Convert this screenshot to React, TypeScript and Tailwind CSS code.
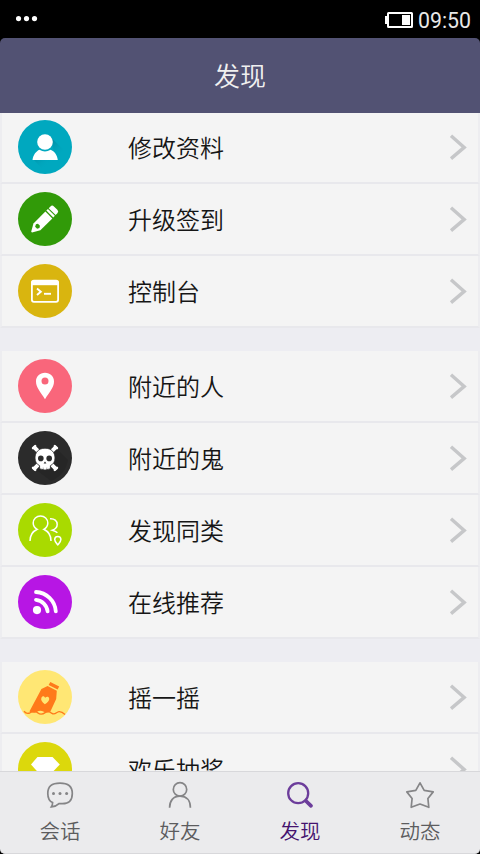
import type { ReactNode } from "react";

type Item = {
  label: string;
  color: string;
  icon: ReactNode;
};

const UserIcon = () => (
  <>
    <path d="M32.5 17 L48 32 A27 27 0 0 1 25 50 L16 40 L38 40 Z" fill="url(#userShade)" />
    <defs>
      <linearGradient id="userShade" x1="24" y1="24" x2="40" y2="44" gradientUnits="userSpaceOnUse">
        <stop offset="0" stopColor="#007d94" stopOpacity="0.9" />
        <stop offset="0.8" stopColor="#00a8bf" stopOpacity="0" />
      </linearGradient>
    </defs>
    <circle cx="27" cy="22" r="7.8" fill="#fff" />
    <path d="M14.5 40 C15.2 34.5 18.4 31.2 21.4 29.8 Q27 33.2 32.6 29.8 C36.4 31.4 39.2 35 39.8 40 Z" fill="#fff" />
  </>
);

const PencilIcon = () => (
  <g transform="translate(13.6 40.2) rotate(-45)" fill="#fff">
    <path d="M0 -0.6 L7.5 -4.9 H24.4 V4.9 H7.5 L0 0.6 Z" />
    <path d="M25.7 -4.9 H28 V4.9 H25.7 Z" />
    <path d="M29.1 -4.9 H31.6 Q34 -4.9 34 -2.4 V2.4 Q34 4.9 31.6 4.9 H29.1 Z" />
    <path d="M6.4 -1.4 L8.6 -2.5 L10.4 -1.4 V1.4 L8.6 2.5 L6.4 1.4 Z" fill="#319a08" />
  </g>
);

const ConsoleIcon = () => (
  <>
    <rect x="13.9" y="16.6" width="26.2" height="21.2" rx="2" fill="none" stroke="#fff" strokeWidth="1.8" />
    <path d="M13.5 17 H40.5 V21.2 H13.5 Z" fill="#fff" />
    <path d="M19 24.6 L22.8 27.7 L19 30.9" fill="none" stroke="#fff" strokeWidth="1.9" />
    <path d="M26 29.8 H33" stroke="#fff" strokeWidth="1.9" />
  </>
);

const PinIcon = () => (
  <path
    fill="#fff"
    fillRule="evenodd"
    d="M27 13.8 C21.8 13.8 18 17.4 18 22.4 C18 28.4 22.5 32.6 27 40.2 C31.5 32.6 36 28.4 36 22.4 C36 17.4 32.2 13.8 27 13.8 Z M27 18.5 A3.5 3.5 0 1 1 27 25.5 A3.5 3.5 0 1 1 27 18.5 Z"
  />
);

const SkullIcon = () => (
  <>
    <path d="M38 17 L50 29 A27 27 0 0 1 33 50 L17 38 Z" fill="#262626" />
    <path d="M15.6 15.6 L38.4 38.4 M38.4 15.6 L15.6 38.4" stroke="#fff" strokeWidth="4" />
    <path
      d="M15 17.2 L17.2 15 M36.8 15 L39 17.2 M15 36.8 L17.2 39 M36.8 39 L39 36.8"
      stroke="#fff"
      strokeWidth="2.4"
      strokeLinecap="round"
    />
    <path
      d="M27 17.2 C20.4 17.2 17 21.6 17 27 C17 30.8 18.8 33.4 21.6 34.6 V37.8 Q27 40.4 32.4 37.8 V34.6 C35.2 33.4 37 30.8 37 27 C37 21.6 33.6 17.2 27 17.2 Z"
      fill="#fff"
      stroke="#2b2b2b"
      strokeWidth="0.8"
    />
    <circle cx="22.8" cy="27.4" r="2.8" fill="#2b2b2b" />
    <circle cx="31.2" cy="27.4" r="2.8" fill="#2b2b2b" />
    <path d="M27 30.6 L28.4 32.6 H25.6 Z" fill="#2b2b2b" />
    <path d="M25.2 36.6 V39 M28.8 36.6 V39" stroke="#2b2b2b" strokeWidth="0.4" />
  </>
);

const PeopleIcon = () => (
  <g fill="none" stroke="#fff" strokeWidth="1.5">
    <path d="M12 38 C12 31.5 14.5 28.5 19.2 26.3 C16.6 24.9 15.2 22.6 15.2 20 C15.2 16 18.4 12.9 22.5 12.9 C26.6 12.9 29.8 16 29.8 20 C29.8 22.6 28.4 24.9 25.8 26.3 C30.5 28.5 33 31.5 33 38" />
    <path d="M32 15.8 C36.4 15.4 39.2 18 39.2 21.4 C39.2 24.2 37.4 26 34.3 27.2 C36.5 27.8 38 28.4 39.4 29.7" />
    <path d="M39.8 33.4 C37.8 33.4 36.7 35 36.7 36.6 C36.7 38.5 38.4 40 39.8 41.8 C41.2 40 42.9 38.5 42.9 36.6 C42.9 35 41.8 33.4 39.8 33.4 Z" />
  </g>
);

const FeedIcon = () => (
  <>
    <circle cx="19" cy="35.1" r="4.1" fill="#fff" />
    <path d="M18 24.8 A13 13 0 0 1 29.6 36.4" fill="none" stroke="#fff" strokeWidth="3.8" strokeLinecap="round" />
    <path d="M18 17 A21 21 0 0 1 37.8 36.4" fill="none" stroke="#fff" strokeWidth="3.8" strokeLinecap="round" />
  </>
);

const BottleIcon = () => (
  <>
    <path d="M32.3 12 L41.2 16.6 L39.6 19.6 L30.6 15 Z" fill="#ff7a1a" />
    <path
      d="M29.6 16 L38.8 20.7 L38.2 29 L32.4 41.4 Q29.5 43.5 25.8 41.8 Q22 39.5 18.8 42 Q15 44 11.4 41.4 L23.4 19 Z"
      fill="#ff7a1a"
    />
    <path
      d="M26.8 34.2 C23.8 31.8 22.4 29.6 23.5 27.4 C24.5 25.6 26.4 26 27.2 27.8 C28.8 26.2 30.8 26.6 31.2 28.4 C31.6 30.6 29.5 32.6 26.8 34.2 Z"
      fill="#ffe774"
    />
    <path
      d="M6 41.2 Q8.6 44.5 12 42.8 C15 40.5 17.5 41 20 43 C22.5 45 25 44.2 27.5 42.4 C30 40.8 32 41.6 34 43.4 C37 45.2 38.5 42 41 41.6 C43.5 41.4 45 42.6 47 44.6"
      fill="none"
      stroke="#ff7a1a"
      strokeWidth="1.4"
    />
  </>
);

const DiamondIcon = () => <path d="M19.5 15 H34.5 L41.8 22.5 L27 38 L13 22.5 Z" fill="#fff" />;

const groups: Item[][] = [
  [
    { label: "修改资料", color: "#00a8bf", icon: <UserIcon /> },
    { label: "升级签到", color: "#319a08", icon: <PencilIcon /> },
    { label: "控制台", color: "#d9b50f", icon: <ConsoleIcon /> },
  ],
  [
    { label: "附近的人", color: "#f9667b", icon: <PinIcon /> },
    { label: "附近的鬼", color: "#2b2b2b", icon: <SkullIcon /> },
    { label: "发现同类", color: "#a9da00", icon: <PeopleIcon /> },
    { label: "在线推荐", color: "#b716e4", icon: <FeedIcon /> },
  ],
  [
    { label: "摇一摇", color: "#ffe774", icon: <BottleIcon /> },
    { label: "欢乐抽奖", color: "#dcd80c", icon: <DiamondIcon /> },
  ],
];

const tabs = [
  {
    label: "会话",
    icon: (
      <g stroke="#858587" strokeWidth="1.7" fill="none">
        <path d="M14 22.6 H17.5 C24.5 22.6 27.3 19 27.3 12.4 C27.3 5.6 23.5 2.1 15 2.1 C6.5 2.1 2.8 5.6 2.8 12.4 C2.8 17 4.2 20 7.6 21.6 C7.6 23.4 7.2 24.6 6.4 25.8 C9.4 25.6 12 24.6 14 22.6 Z" />
        <g fill="#858587" stroke="none">
          <circle cx="8.5" cy="12.6" r="1.5" />
          <circle cx="15" cy="12.6" r="1.5" />
          <circle cx="21.6" cy="12.6" r="1.5" />
        </g>
      </g>
    ),
  },
  {
    label: "好友",
    icon: (
      <g stroke="#858587" strokeWidth="1.7" fill="none">
        <circle cx="15" cy="8.4" r="6.7" />
        <path d="M4.6 26.8 C4.6 19.8 8.2 15.2 15 15.2 C21.8 15.2 25.4 19.8 25.4 26.8" />
      </g>
    ),
  },
  {
    label: "发现",
    active: true,
    icon: (
      <g stroke="#6c3d9b" fill="none">
        <circle cx="13.2" cy="12.2" r="10" strokeWidth="2.3" />
        <path d="M21 20 L26 24.8" strokeWidth="3.8" strokeLinecap="round" />
      </g>
    ),
  },
  {
    label: "动态",
    icon: (
      <path
        d="M15 1.8 L19.2 9.4 L28.2 10.9 L22.9 17.5 L23.8 26.3 L15 23 L6.2 26.3 L7.1 17.5 L1.8 10.9 L10.8 9.4 Z"
        stroke="#858587"
        strokeWidth="1.7"
        strokeLinejoin="round"
        fill="none"
      />
    ),
  },
];

const StatusBar = () => (
  <div className="flex h-[38px] shrink-0 items-center justify-between pr-[9px] pl-4">
    <svg width="22" height="6" viewBox="0 0 22 6" fill="#fff">
      <circle cx="2.5" cy="2.6" r="2.6" />
      <circle cx="10.5" cy="2.6" r="2.6" />
      <circle cx="18.5" cy="2.6" r="2.6" />
    </svg>
    <div className="flex items-center pt-[2px]">
      <svg className="mr-[5px]" width="28" height="16" viewBox="0 0 28 16">
        <path d="M0 4 H2 V12 H0 Z" fill="#fff" />
        <rect x="3" y="1" width="24" height="14" rx="0.5" fill="none" stroke="#fff" strokeWidth="2" />
        <rect x="17" y="3" width="8" height="10" fill="#fff" />
      </svg>
      <span className="pt-0.5 font-[Roboto] text-[21.3px] leading-6 text-[#e8e8e8]">09:50</span>
    </div>
  </div>
);

const Row = ({ item }: { item: Item }) => (
  <div className="flex h-[72px] items-start border-x-2 border-b-2 border-x-[#ededf0] border-b-[#e8e8ec] bg-[#f4f4f4] pt-2 pr-2.5 pl-4">
    <svg className="shrink-0" width="54" height="54" viewBox="0 0 54 54">
      <circle cx="27" cy="27" r="27" fill={item.color} />
      {item.icon}
    </svg>
    <span className="ml-14 flex-1 text-2xl leading-[53px] font-[350] text-[#161616]">{item.label}</span>
    <svg className="mt-[13px]" width="20" height="28" viewBox="0 0 20 28">
      <path d="M3 2.8 L16.2 14.4 L3 25.6" fill="none" stroke="#c6c7c9" strokeWidth="3.4" />
    </svg>
  </div>
);

const App = () => {
  return (
    <div className="flex h-[854px] w-[480px] flex-col overflow-hidden bg-black font-['Noto_Sans_CJK_SC',sans-serif]">
      <StatusBar />

      <header className="flex h-[75px] shrink-0 items-center justify-center rounded-t-[5px] bg-[#525273]">
        <h1 className="-mt-0.5 text-[26px] font-[350] text-[#f0f0f0]">发现</h1>
      </header>

      {/* Scrollable list */}
      <main className="min-h-0 flex-1 overflow-hidden bg-[#ededf2]">
        <div className="-mt-px flex flex-col gap-[23px]">
          {groups.map((group, i) => (
            <section key={i}>
              {group.map((item) => (
                <Row key={item.label} item={item} />
              ))}
            </section>
          ))}
        </div>
      </main>

      {/* Bottom tabs */}
      <nav className="grid h-[83px] shrink-0 grid-cols-4 rounded-b-[5px] border-y border-[#d8d8db] bg-[#ebebed]">
        {tabs.map((tab) => (
          <button key={tab.label} className="flex flex-col items-center pt-[9px]">
            <svg width="30" height="28" viewBox="0 0 30 28">
              {tab.icon}
            </svg>
            <span
              className={
                tab.active
                  ? "mt-[7px] text-[20.5px] leading-7 font-[350] text-[#44136f]"
                  : "mt-[7px] text-[20.5px] leading-7 font-[350] text-[#5c5c5e]"
              }
            >
              {tab.label}
            </span>
          </button>
        ))}
      </nav>
    </div>
  );
};

export default App;
